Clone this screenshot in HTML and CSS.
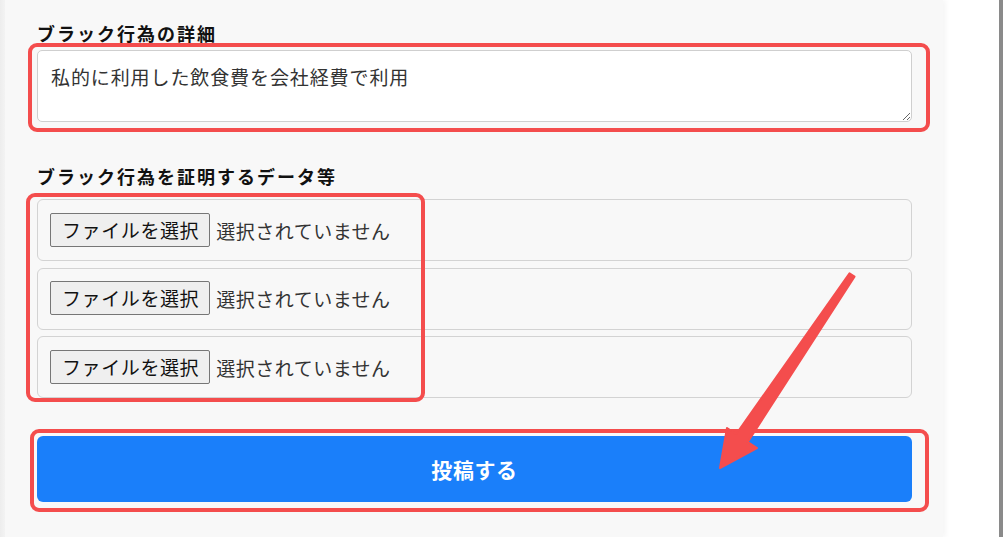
FILE: index.html
```html
<!DOCTYPE html>
<html lang="ja">
<head>
<meta charset="utf-8">
<link rel="stylesheet" href="styles.css">
</head>
<body>
<div class="page">
  <div class="panel">
    <div class="field">
      <div class="label">ブラック行為の詳細</div>
      <textarea class="detail">私的に利用した飲食費を会社経費で利用</textarea>
    </div>
    <div class="field field-files">
      <div class="label label-files">ブラック行為を証明するデータ等</div>
      <div class="files">
        <div class="file-box"><span class="file-btn">ファイルを選択</span><span class="file-name">選択されていません</span></div>
        <div class="file-box"><span class="file-btn">ファイルを選択</span><span class="file-name">選択されていません</span></div>
        <div class="file-box"><span class="file-btn">ファイルを選択</span><span class="file-name">選択されていません</span></div>
      </div>
    </div>
    <button class="submit">投稿する</button>
  </div>
  <div class="spacer"></div>
  <div class="edge"></div>
</div>
<svg class="annot" width="1003" height="537" viewBox="0 0 1003 537" xmlns="http://www.w3.org/2000/svg">
  <g fill="none" stroke="#f44d4d" stroke-width="4">
    <rect x="30" y="45" width="898" height="85" rx="7"/>
    <rect x="28" y="195" width="395" height="205" rx="7"/>
    <rect x="32" y="431" width="895" height="79" rx="7"/>
  </g>
  <polygon points="849.5,273.3 854.5,276.7 747.8,442 757,448 720,468 727,428 736.2,434" fill="#f44d4d" stroke="#f44d4d" stroke-width="2" stroke-linejoin="round"/>
</svg>
</body>
</html>
```
FILE: styles.css
```css
html, body {
  margin: 0;
  padding: 0;
  background: #ffffff;
}
body {
  font-family: "Noto Sans CJK JP", "Noto Sans", sans-serif;
  color: #111;
  position: relative;
  width: 1003px;
  height: 537px;
  overflow: hidden;
}
.page {
  display: flex;
  height: 537px;
  background: linear-gradient(to right, #ededed 0, #f3f3f3 5px, #ffffff 5px);
}
.panel {
  margin-left: 5px;
  width: 938px;
  box-sizing: border-box;
  padding: 21px 31px 0 32px;
  background: #f8f8f8;
  box-shadow: 3px 0 5px rgba(0, 0, 0, 0.04);
  display: flex;
  flex-direction: column;
}
.spacer {
  flex: 1;
}
.edge {
  width: 4px;
  background: #8a8a8a;
}
.label {
  font-size: 18px;
  font-weight: 700;
  line-height: 24px;
  letter-spacing: 2px;
  color: #111;
  margin-bottom: 5px;
}
.label-files {
  margin-bottom: 11px;
}
.field-files {
  margin-top: 42px;
}
.detail {
  display: block;
  box-sizing: border-box;
  width: 875px;
  height: 72px;
  margin: 0;
  padding: 14px 13px;
  border: 1px solid #cfcfcf;
  border-radius: 5px;
  background: #fff;
  font-family: inherit;
  font-size: 19px;
  line-height: 24px;
  letter-spacing: 0.9px;
  color: #333;
  resize: vertical;
}
.files {
  display: flex;
  flex-direction: column;
  gap: 6.5px;
}
.file-box {
  box-sizing: border-box;
  height: 62px;
  border: 1px solid #d3d3d3;
  border-radius: 6px;
  background: #f8f8f8;
  padding: 0 12px;
  display: flex;
  align-items: center;
}
.file-btn {
  box-sizing: border-box;
  height: 34px;
  padding: 0 10px 0 11px;
  border: 1px solid #767676;
  border-radius: 2px;
  background: #efefef;
  font-size: 19px;
  line-height: 32px;
  letter-spacing: 0.6px;
  color: #111;
  margin-top: -1px;
}
.file-name {
  margin-left: 6px;
  font-size: 19px;
  letter-spacing: 0.5px;
  color: #333;
}
.submit {
  margin-top: 38px;
  width: 875px;
  height: 66px;
  border: none;
  border-radius: 6px;
  background: #1a7ffa;
  color: #fff;
  font-family: inherit;
  font-size: 21px;
  font-weight: 700;
  letter-spacing: 0.6px;
}
.annot {
  position: absolute;
  left: 0;
  top: 0;
  pointer-events: none;
}
```
